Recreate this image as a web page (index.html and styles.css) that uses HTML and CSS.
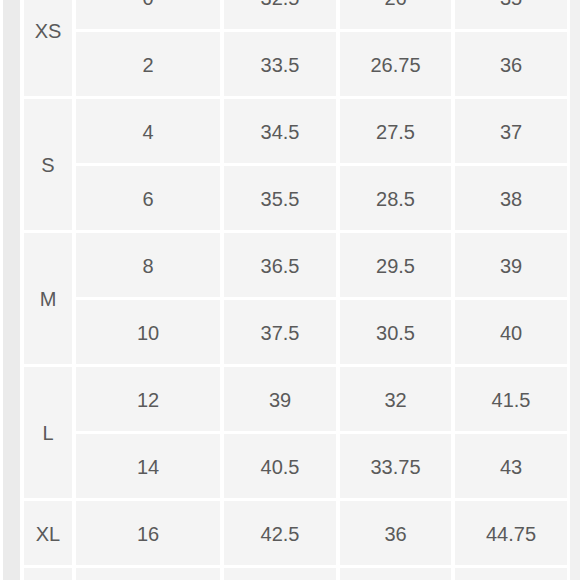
FILE: index.html
```html
<!DOCTYPE html>
<html>
<head>
<meta charset="utf-8">
<link rel="stylesheet" href="styles.css">
</head>
<body>
<div class="page">
  <div class="strip-left"></div>
  <div class="chart">
    <div class="size span2">XS</div>
    <div class="cell">0</div><div class="cell">32.5</div><div class="cell">26</div><div class="cell">35</div>
    <div class="cell">2</div><div class="cell">33.5</div><div class="cell">26.75</div><div class="cell">36</div>

    <div class="size span2">S</div>
    <div class="cell">4</div><div class="cell">34.5</div><div class="cell">27.5</div><div class="cell">37</div>
    <div class="cell">6</div><div class="cell">35.5</div><div class="cell">28.5</div><div class="cell">38</div>

    <div class="size span2">M</div>
    <div class="cell">8</div><div class="cell">36.5</div><div class="cell">29.5</div><div class="cell">39</div>
    <div class="cell">10</div><div class="cell">37.5</div><div class="cell">30.5</div><div class="cell">40</div>

    <div class="size span2">L</div>
    <div class="cell">12</div><div class="cell">39</div><div class="cell">32</div><div class="cell">41.5</div>
    <div class="cell">14</div><div class="cell">40.5</div><div class="cell">33.75</div><div class="cell">43</div>

    <div class="size">XL</div>
    <div class="cell">16</div><div class="cell">42.5</div><div class="cell">36</div><div class="cell">44.75</div>

    <div class="size"></div>
    <div class="cell"></div><div class="cell"></div><div class="cell"></div><div class="cell"></div>
  </div>
  <div class="strip-right"></div>
</div>
</body>
</html>
```

FILE: styles.css
```css
html, body {
  margin: 0;
  padding: 0;
  background: #ffffff;
  overflow: hidden;
  height: 580px;
}

.page {
  display: flex;
  align-items: stretch;
  height: 580px;
  overflow: hidden;
}

.strip-left {
  flex: 0 0 17px;
  margin-left: 3px;
  margin-right: 4px;
  background: #ebebeb;
}

.strip-right {
  flex: 0 0 10px;
  margin-left: 3px;
  background: #f1f1f1;
}

.chart {
  display: grid;
  grid-template-columns: 48px 144px 112px 111px 112px;
  grid-auto-rows: 64px;
  column-gap: 4px;
  row-gap: 3px;
  margin-top: -35px;
  align-self: flex-start;
  font-family: "Liberation Sans", Arial, Helvetica, sans-serif;
  font-size: 20px;
  color: #5a5a5a;
}

.cell, .size {
  background: #f4f4f4;
  display: flex;
  align-items: center;
  justify-content: center;
  padding-top: 2px;
}

.span2 {
  grid-row: span 2;
}
```
